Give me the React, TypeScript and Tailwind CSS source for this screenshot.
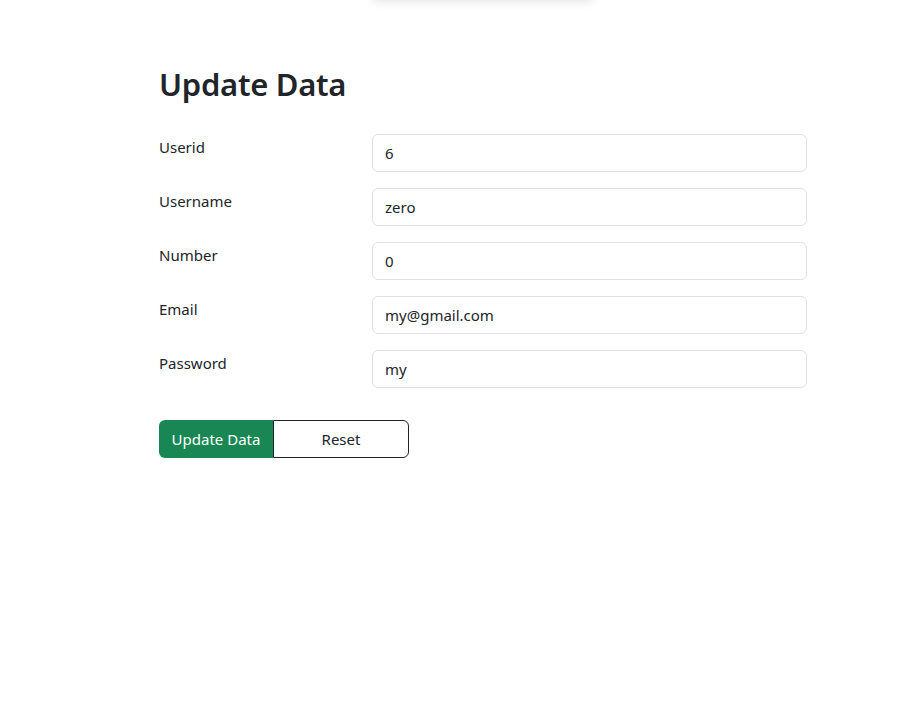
import React, { useState } from 'react';

const fields = [
  { name: 'userid', label: 'Userid', type: 'text' },
  { name: 'username', label: 'Username', type: 'text' },
  { name: 'number', label: 'Number', type: 'text' },
  { name: 'email', label: 'Email', type: 'email' },
  { name: 'password', label: 'Password', type: 'text' },
];

const initial: { [key: string]: string } = {
  userid: '6',
  username: 'zero',
  number: '0',
  email: 'my@gmail.com',
  password: 'my',
};

const App: React.FC = () => {
  const [formData, setFormData] = useState(initial);

  const handleChange = (e: React.ChangeEvent<HTMLInputElement>) => {
    setFormData({ ...formData, [e.target.name]: e.target.value });
  };

  return (
    <div
      className="relative min-h-[720px] bg-white text-[#212529]"
      style={{ fontFamily: '"Segoe UI", "Noto Sans", "Open Sans", sans-serif' }}
    >
      {/* dropdown peeking in from above */}
      <div className="absolute left-[372px] top-[-40px] h-[40px] w-[222px] bg-white shadow-[0_2px_10px_rgba(0,0,0,0.1)] rounded-md" />

      <div className="w-[648px] ml-[159px] pt-[66px]">
        <h2 className="text-[31px] font-semibold leading-[1.2] mb-[31px] tracking-[-0.3px]">Update Data</h2>

        <form onSubmit={(e) => e.preventDefault()}>
          {fields.map((f) => (
            <div key={f.name} className="flex mb-4">
              <label htmlFor={f.name} className="w-[213px] pt-[1px] text-[15px] leading-6">
                {f.label}
              </label>
              <input
                id={f.name}
                name={f.name}
                type={f.type}
                value={formData[f.name]}
                onChange={handleChange}
                className="flex-1 h-[38px] border border-[#dee2e6] rounded-md px-3 text-[15px] text-[#212529] focus:outline-none"
              />
            </div>
          ))}

          <div className="flex pt-4">
            <button
              type="submit"
              className="h-[38px] w-[114px] bg-[#198754] text-white text-[15px] rounded-l-md"
            >
              Update Data
            </button>
            <button
              type="button"
              onClick={() => setFormData(initial)}
              className="h-[38px] w-[136px] border border-[#212529] text-[#212529] text-[15px] rounded-r-md"
            >
              Reset
            </button>
          </div>
        </form>
      </div>
    </div>
  );
};

export default App;
